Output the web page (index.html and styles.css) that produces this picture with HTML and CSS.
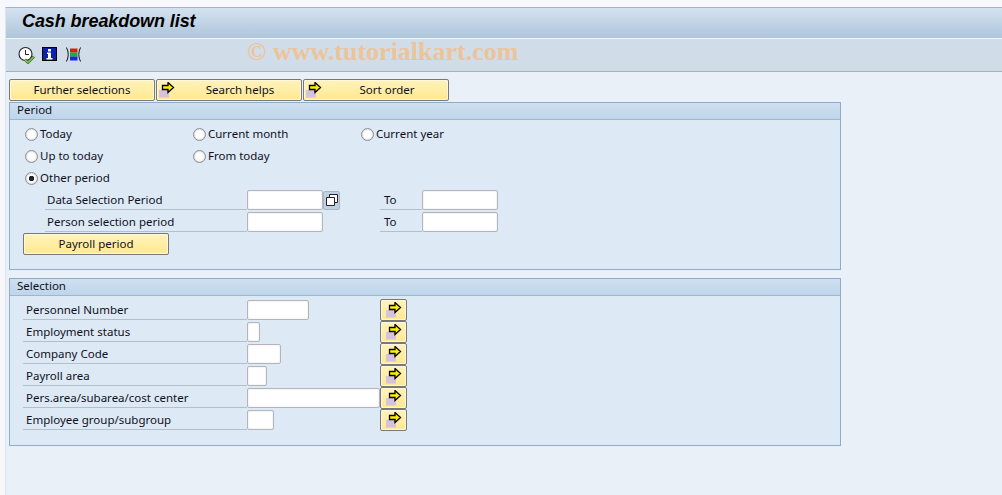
FILE: index.html
```html
<!DOCTYPE html>
<html lang="en">
<head>
<meta charset="utf-8">
<title>Cash breakdown list</title>
<link rel="stylesheet" href="styles.css">
</head>
<body>
<svg class="defs" width="0" height="0" aria-hidden="true">
  <symbol id="arrow" viewBox="0 0 16 16">
    <path d="M0 8h10v7.500h-10z" fill="#d3c3dd"/>
    <path d="M3.500 3.500h5.500v-3l5.500 5-5.500 5v-3h-5.500z" fill="#ffee00" stroke="#000" stroke-width="1.300"/>
  </symbol>
</svg>
<div class="frame">
  <header class="titlebar"><h1>Cash breakdown list</h1></header>
  <div class="toolbar">
    <svg class="tool" viewBox="0 0 24 18">
      <circle cx="7.500" cy="8" r="6.500" fill="#fff" stroke="#222" stroke-width="1.100"/>
      <path d="M7.500 4v4.500h3.500" fill="none" stroke="#222" stroke-width="1"/>
      <path d="M7 13.500l3 3 6-6" fill="none" stroke="#3c6a28" stroke-width="2.800"/>
      <path d="M7 13.500l3 3 6-6" fill="none" stroke="#7fc455" stroke-width="1.400"/>
    </svg>
    <svg class="tool" viewBox="0 0 24 18">
      <rect x="0.500" y="1.500" width="14" height="13" fill="#0a22ac" stroke="#000"/>
      <path d="M6 3h3v2.500h-3zM5 6.500h4v5.500h1.500v1.500h-6v-1.500h1.500v-4h-1z" fill="#fff"/>
    </svg>
    <svg class="tool" viewBox="0 0 24 18">
      <path d="M0.500 1.500q3.500 7 0 14M14.500 1.500q-3.500 7 0 14" fill="none" stroke="#111"/>
      <rect x="4" y="2.500" width="7.500" height="4" fill="#e01818"/>
      <rect x="4" y="6.500" width="7.500" height="4" fill="#18b030"/>
      <rect x="4" y="10.500" width="7.500" height="4" fill="#1828e0"/>
    </svg>
    <span class="watermark">© www.tutorialkart.com</span>
  </div>
  <main class="content">
    <nav class="tabs">
      <button class="btn tab" type="button"><span>Further selections</span></button>
      <button class="btn tab has-icon" type="button"><svg class="ic"><use href="#arrow"/></svg><span>Search helps</span></button>
      <button class="btn tab has-icon" type="button"><svg class="ic"><use href="#arrow"/></svg><span>Sort order</span></button>
    </nav>

    <section class="group period">
      <h2>Period</h2>
      <div class="radios">
        <label class="radio"><i></i>Today</label>
        <label class="radio"><i></i>Current month</label>
        <label class="radio"><i></i>Current year</label>
        <label class="radio"><i></i>Up to today</label>
        <label class="radio"><i></i>From today</label>
        <span></span>
        <label class="radio on"><i></i>Other period</label>
      </div>
      <div class="row indent">
        <span class="lab">Data Selection Period</span>
        <span class="field w76"></span>
        <span class="multi"><svg width="12" height="12" viewBox="0 0 12 12"><path d="M3.500 .5h8v8h-8z" fill="#fff" stroke="#222"/><path d="M.5 3.500h8v8h-8z" fill="#fff" stroke="#222"/></svg></span>
        <span class="lab to">To</span>
        <span class="field w76"></span>
      </div>
      <div class="row indent">
        <span class="lab">Person selection period</span>
        <span class="field w76"></span>
        <span class="gap17"></span>
        <span class="lab to">To</span>
        <span class="field w76"></span>
      </div>
      <button class="btn payroll" type="button">Payroll period</button>
    </section>

    <section class="group selection">
      <h2>Selection</h2>
      <div class="row sel"><span class="lab">Personnel Number</span><div class="cell"><span class="field w62"></span></div><button class="btn more" type="button"><svg class="ic"><use href="#arrow"/></svg></button></div>
      <div class="row sel"><span class="lab">Employment status</span><div class="cell"><span class="field w13"></span></div><button class="btn more" type="button"><svg class="ic"><use href="#arrow"/></svg></button></div>
      <div class="row sel"><span class="lab">Company Code</span><div class="cell"><span class="field w34"></span></div><button class="btn more" type="button"><svg class="ic"><use href="#arrow"/></svg></button></div>
      <div class="row sel"><span class="lab">Payroll area</span><div class="cell"><span class="field w20"></span></div><button class="btn more" type="button"><svg class="ic"><use href="#arrow"/></svg></button></div>
      <div class="row sel"><span class="lab">Pers.area/subarea/cost center</span><div class="cell"><span class="field w133"></span></div><button class="btn more" type="button"><svg class="ic"><use href="#arrow"/></svg></button></div>
      <div class="row sel"><span class="lab">Employee group/subgroup</span><div class="cell"><span class="field w27"></span></div><button class="btn more" type="button"><svg class="ic"><use href="#arrow"/></svg></button></div>
    </section>
  </main>
</div>
</body>
</html>
```

FILE: styles.css
```css
* { box-sizing: border-box; }
html, body { margin: 0; height: 100%; }
body {
  background: #f6f8fc;
  color: #10101c;
  font: 11.500px "Noto Sans", "DejaVu Sans", sans-serif;
  overflow: hidden;
}
.defs { position: absolute; }
.frame {
  margin: 7px 0 0 5px;
  height: 488px;
  border-left: 1px solid #dfe4ea;
  border-top: 1px solid #a9b1c2;
  background: #e9f0f8;
}
.titlebar {
  height: 30px;
  padding: 0 0 4px 16px;
  display: flex;
  align-items: center;
  background: linear-gradient(#d4e2f0, #aec5db);
}
.titlebar h1 {
  margin: 0;
  font: italic bold 18px "Liberation Sans", sans-serif;
  letter-spacing: -0.080px;
  color: #000;
}
.toolbar {
  height: 34px;
  padding: 0 0 0 12px;
  display: flex;
  align-items: center;
  background: #d0dde8;
  border-top: 1px solid #f0f5fa;
  border-bottom: 1px solid #a5b1c2;
}
.tool { flex: none; width: 24px; height: 18px; }
.watermark {
  margin: 0 0 6px 157px;
  font: bold 26px "Liberation Serif", serif;
  color: #edc49a;
  white-space: nowrap;
}
.content { padding: 7px 0 0 3px; }
.tabs { display: flex; gap: 1px; height: 23px; }
.btn {
  margin: 0;
  padding: 0 0 2px;
  font: inherit;
  color: inherit;
  border: 1px solid #77787a;
  border-radius: 2px;
  background: linear-gradient(#fff3bb, #ffe88f);
  box-shadow: inset 0 0 0 1px #fff8d8;
  display: flex;
  align-items: center;
  justify-content: center;
  position: relative;
}
.tab { width: 146px; height: 22px; }
.has-icon { padding-left: 22px; }
.ic { width: 16px; height: 16px; flex: none; }
.tab .ic { position: absolute; left: 2px; top: 2px; }
.group {
  width: 832px;
  border: 1px solid #8eabc8;
  background: #dde9f4;
}
.group h2 {
  margin: 0;
  height: 17px;
  padding: 0 0 0 7px;
  font: inherit;
  line-height: 14px;
  background: linear-gradient(#cfe0f0, #bfd5ea);
  border-bottom: 1px solid #9fb6cf;
}
.period { height: 168px; }
.selection { height: 168px; margin-top: 8px; }
.selection h2 { margin-bottom: 3px; }
.radios {
  display: grid;
  grid-template-columns: 168px 168px 200px;
  grid-auto-rows: 22px;
  padding: 3px 0 0 15px;
}
.radio { display: flex; align-items: center; gap: 2px; white-space: nowrap; line-height: 20px; }
.radio i {
  width: 13px;
  height: 13px;
  border-radius: 50%;
  border: 1px solid #8b8f95;
  background: #fff;
  box-shadow: inset 0 0 2px #aaa;
  flex: none;
}
.radio.on i {
  background: radial-gradient(circle, #222 0 2.500px, #fff 3px);
}
.row { display: flex; height: 22px; align-items: center; }
.indent { padding-left: 35px; }
.sel { padding-left: 13px; }
.lab {
  height: 21px;
  margin-top: -1px;
  line-height: 22px;
  padding-left: 2px;
  border-bottom: 1px solid #b3bfcc;
  white-space: nowrap;
}
.indent .lab { width: 202px; }
.sel .lab { width: 224px; padding-left: 3px; }
.indent .lab.to { width: 42px; padding-left: 4px; }
.field {
  display: block;
  height: 20px;
  background: #fff;
  border: 1px solid #b2b6bb;
  border-radius: 2px;
  box-shadow: inset 0 0 2px #ddd;
  flex: none;
}
.w76 { width: 76px; }
.w62 { width: 62px; }
.w13 { width: 13px; }
.w34 { width: 34px; }
.w20 { width: 20px; }
.w133 { width: 133px; }
.w27 { width: 27px; }
.cell { width: 133px; flex: none; }
.multi {
  width: 17px;
  height: 19px;
  flex: none;
  display: flex;
  align-items: center;
  justify-content: center;
  background: #bfd0e4;
  border: 1px solid #a9b5c4;
  border-radius: 2px;
}
.gap17 { width: 17px; flex: none; }
.indent .field + .multi + .lab, .indent .gap17 + .lab { margin-left: 40px; }
.payroll { width: 146px; height: 22px; margin: 0 0 0 13px; }
.more { width: 27px; height: 22px; flex: none; padding: 0; }
```
